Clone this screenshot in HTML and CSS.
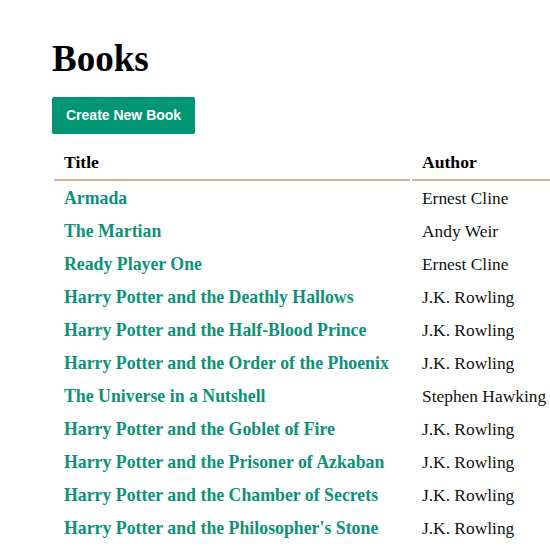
FILE: index.html
```html
<!DOCTYPE html>
<html>
<head>
<meta charset="utf-8">
<link rel="stylesheet" href="styles.css">
</head>
<body>
<main class="page">
  <h1 class="title">Books</h1>
  <a class="btn" href="#">Create New Book</a>
  <table class="books">
    <thead>
      <tr><th class="col-title">Title</th><th class="col-author">Author</th></tr>
    </thead>
    <tbody>
      <tr><td><a href="#">Armada</a></td><td>Ernest Cline</td></tr>
      <tr><td><a href="#">The Martian</a></td><td>Andy Weir</td></tr>
      <tr><td><a href="#">Ready Player One</a></td><td>Ernest Cline</td></tr>
      <tr><td><a href="#">Harry Potter and the Deathly Hallows</a></td><td>J.K. Rowling</td></tr>
      <tr><td><a href="#">Harry Potter and the Half-Blood Prince</a></td><td>J.K. Rowling</td></tr>
      <tr><td><a href="#">Harry Potter and the Order of the Phoenix</a></td><td>J.K. Rowling</td></tr>
      <tr><td><a href="#">The Universe in a Nutshell</a></td><td>Stephen Hawking</td></tr>
      <tr><td><a href="#">Harry Potter and the Goblet of Fire</a></td><td>J.K. Rowling</td></tr>
      <tr><td><a href="#">Harry Potter and the Prisoner of Azkaban</a></td><td>J.K. Rowling</td></tr>
      <tr><td><a href="#">Harry Potter and the Chamber of Secrets</a></td><td>J.K. Rowling</td></tr>
      <tr><td><a href="#">Harry Potter and the Philosopher's Stone</a></td><td>J.K. Rowling</td></tr>
    </tbody>
  </table>
</main>
</body>
</html>
```

FILE: styles.css
```css
html, body {
  margin: 0;
  padding: 0;
  background: #fff;
}
body {
  font-family: "Liberation Serif", "Times New Roman", serif;
  color: #111;
}
.page {
  padding: 40px 0 0 52px;
}
.title {
  margin: 0 0 19px 0;
  font-size: 37px;
  font-weight: bold;
  line-height: 38px;
  color: #000;
}
.btn {
  display: inline-block;
  background: #009673;
  color: #fff;
  font-family: "Liberation Sans", Arial, sans-serif;
  font-weight: bold;
  font-size: 14px;
  line-height: 37px;
  padding: 0 14px;
  border-radius: 2px;
  text-decoration: none;
}
.books {
  margin-top: 10px;
  border-collapse: separate;
  border-spacing: 2px;
  table-layout: fixed;
  width: 506px;
}
.books th {
  text-align: left;
  font-size: 17.6px;
  font-weight: bold;
  color: #000;
  padding: 6px 10px 5.5px 10px;
  border-bottom: 2px solid #d7b48f;
}
.col-title { width: 336px; }
.col-author { width: 124px; }
.books td {
  font-size: 17.4px;
  padding: 6px 10px;
  line-height: 19px;
  white-space: nowrap;
}
.books td a {
  color: #0c9277;
  font-weight: bold;
  font-size: 17.8px;
  text-decoration: none;
}
```
